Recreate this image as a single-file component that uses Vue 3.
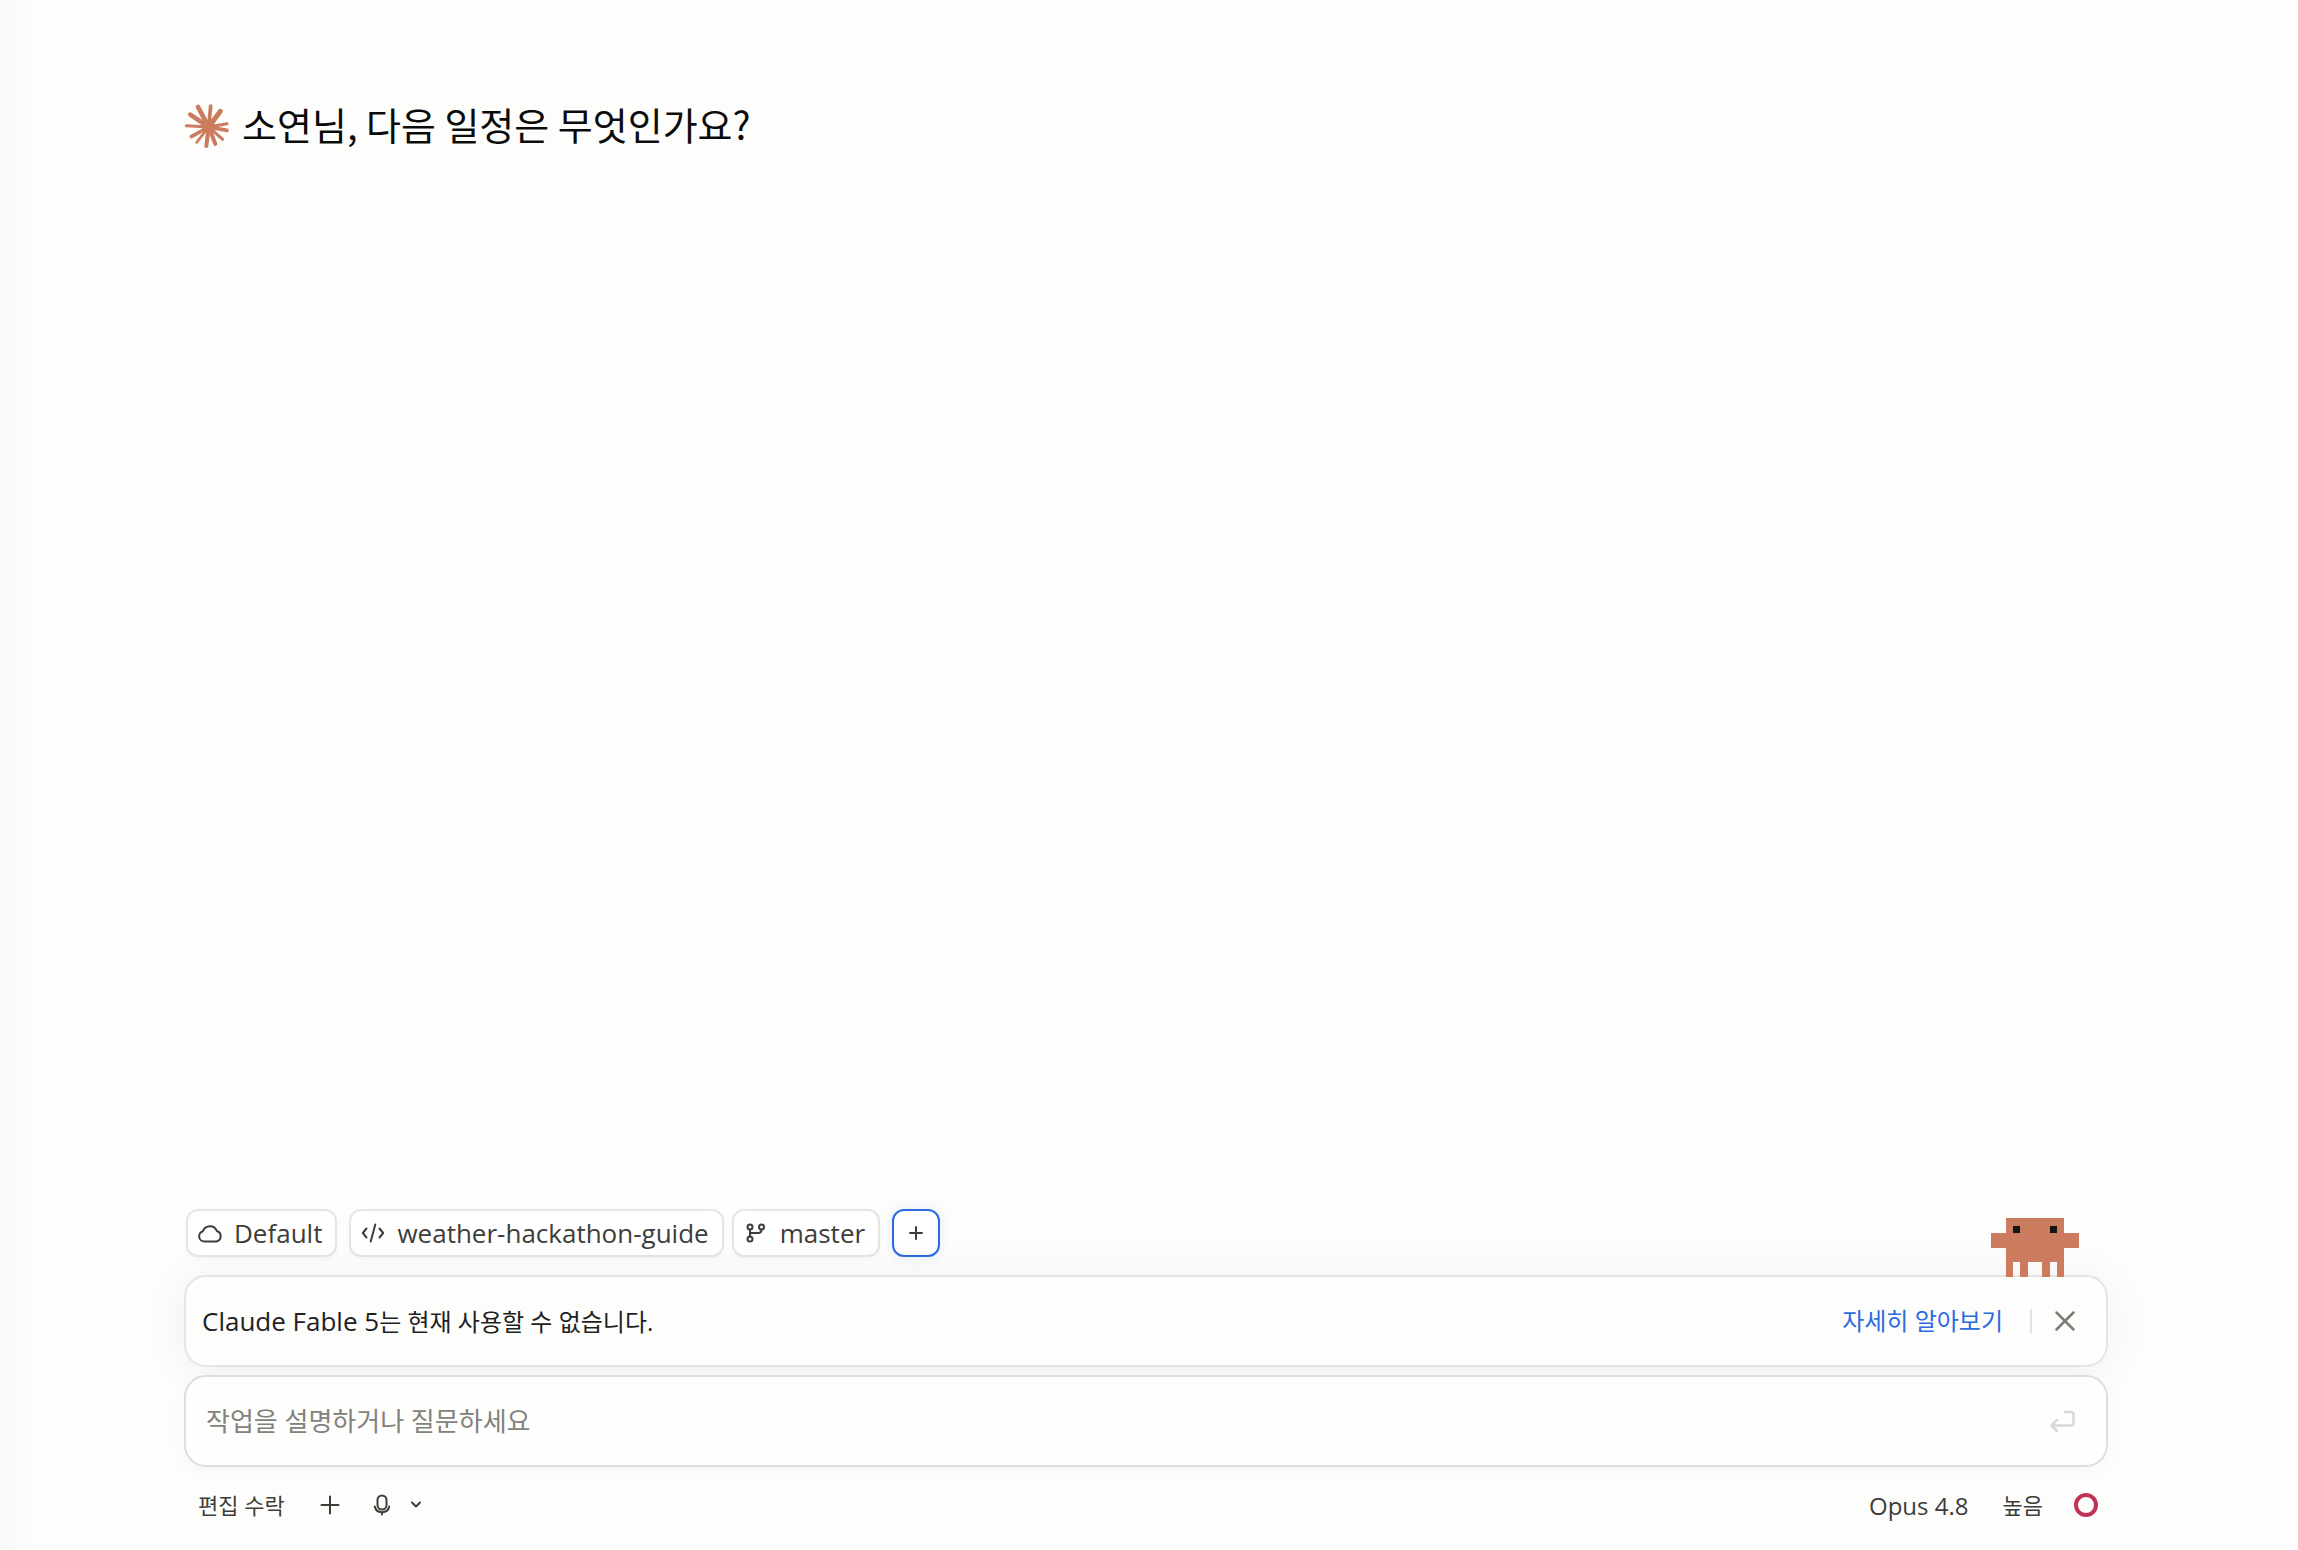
<script setup>
import { ref } from 'vue'

const prompt = ref('')
const showNotice = ref(true)

// ray tips of the logo, with their stroke widths
const rays = [
    { x: 57, y: 36, w: 14 },
    { x: 95, y: 33, w: 11 },
    { x: 124, y: 49, w: 15 },
    { x: 144, y: 86, w: 9 },
    { x: 144, y: 106, w: 11 },
    { x: 131, y: 133, w: 9 },
    { x: 109, y: 147, w: 12 },
    { x: 82, y: 153, w: 12 },
    { x: 53, y: 142, w: 8 },
    { x: 37, y: 125, w: 11 },
    { x: 22, y: 92, w: 9 },
    { x: 34, y: 59, w: 14 },
]
</script>

<template>
    <main class="page">
        <header class="greeting">
            <svg class="logo" viewBox="15 24 138 138" aria-hidden="true">
                <line v-for="(ray, i) in rays" :key="i" x1="89" y1="96" :x2="ray.x" :y2="ray.y" :stroke-width="ray.w" />
                <circle cx="89" cy="96" r="20" />
            </svg>
            <h1>소연님, 다음 일정은 무엇인가요?</h1>
        </header>

        <section class="composer">
            <div class="chips">
                <button class="chip" type="button">
                    <svg class="icon" viewBox="0 0 28 28">
                        <path d="M8.5 22.5a5.2 5.2 0 0 1-1.6-10.2A7.4 7.4 0 0 1 20.8 12a5.4 5.4 0 0 1-.6 10.5z" />
                    </svg>
                    Default
                </button>
                <div class="repo">
                    <button class="chip" type="button">
                        <svg class="icon" viewBox="0 0 28 28">
                            <path d="M7.5 9.5 3.8 14l3.7 4.5M20.5 9.5l3.7 4.5-3.7 4.5M16.3 5.5l-4.6 17" />
                        </svg>
                        weather-hackathon-guide
                    </button>
                    <button class="chip" type="button">
                        <svg class="icon" viewBox="0 0 28 28">
                            <circle cx="8" cy="8" r="2.5" />
                            <circle cx="19.5" cy="8" r="2.5" />
                            <circle cx="8" cy="20" r="2.5" />
                            <path d="M8 10.5v7M19.5 10.500c0 2.500-1 3.500-3.500 3.500H8" />
                        </svg>
                        master
                    </button>
                </div>
                <button class="chip chip-add" type="button" aria-label="추가">
                    <svg class="icon" viewBox="0 0 28 28">
                        <path d="M14 8v12M8 14h12" />
                    </svg>
                </button>
            </div>

            <div v-if="showNotice" class="card notice">
                <svg class="mascot" viewBox="0 0 12 8" shape-rendering="crispEdges" aria-hidden="true">
                    <path class="mascot-body" d="M2 0h8v2h2v2h-2v4H9V6H8v2H7V6H5v2H4V6H3v2H2V4H0V2h2z" />
                    <path class="mascot-eyes" d="M3 1h1v1H3zM8 1h1v1H8z" />
                </svg>
                <p>Claude Fable 5<span class="ko">는 현재 사용할 수 없습니다.</span></p>
                <a href="#">자세히 알아보기</a>
                <span class="divider"></span>
                <button class="icon-btn close" type="button" aria-label="닫기" @click="showNotice = false">
                    <svg class="icon" viewBox="0 0 28 28">
                        <path d="m5.5 5.5 17 17M22.500 5.500l-17 17" />
                    </svg>
                </button>
            </div>

            <form class="card prompt" @submit.prevent>
                <input v-model="prompt" type="text" placeholder="작업을 설명하거나 질문하세요" aria-label="작업을 설명하거나 질문하세요">
                <button class="icon-btn send" type="submit" aria-label="보내기">
                    <svg class="icon" viewBox="0 0 28 28">
                        <path d="M17 5h6a2.500 2.500 0 0 1 2.500 2.500v8.500a2.500 2.500 0 0 1-2.500 2.500H3.500M9 13l-5.500 5.500L9 24" />
                    </svg>
                </button>
            </form>

            <footer class="toolbar">
                <button class="tool ko-tool" type="button">편집 수락</button>
                <button class="icon-btn add" type="button" aria-label="파일 추가">
                    <svg class="icon" viewBox="0 0 28 28">
                        <path d="M14 5.500v17M5.500 14h17" />
                    </svg>
                </button>
                <button class="icon-btn mic" type="button" aria-label="음성 입력">
                    <svg class="icon" viewBox="0 0 28 28">
                        <rect x="9.500" y="4.500" width="9" height="14" rx="4.500" />
                        <path d="M6.800 15.500c.7 3.600 3.500 5.700 7.200 5.700s6.500-2.100 7.200-5.700M14 21.200v2.300" />
                    </svg>
                </button>
                <button class="icon-btn more" type="button" aria-label="마이크 설정">
                    <svg class="icon" viewBox="0 0 28 28">
                        <path d="m10 11.500 4 4 4-4" />
                    </svg>
                </button>
                <span class="spacer"></span>
                <button class="tool" type="button">Opus 4.8</button>
                <button class="tool ko-tool effort" type="button">높음</button>
                <button class="ring" type="button" aria-label="사용량"></button>
            </footer>
        </section>
    </main>
</template>

<style>
body {
    margin: 0;
    background: #fdfdfc;
}
</style>

<style scoped>
.page {
    display: flex;
    flex-direction: column;
    justify-content: space-between;
    box-sizing: border-box;
    min-height: 100vh;
    padding: 96px 190px 21px 184px;
    overflow: hidden;
    background: linear-gradient(90deg, #f9f9f8 0, #fdfdfc 36px);
    color: #3d3d3a;
    font-family: "Open Sans", "Noto Sans CJK KR", sans-serif;
}
button,
input {
    margin: 0;
    padding: 0;
    border: 0;
    background: none;
    color: inherit;
    font: inherit;
}
button {
    cursor: pointer;
}
.icon {
    display: block;
    flex: none;
    width: 28px;
    height: 28px;
    fill: none;
    stroke: currentColor;
    stroke-width: 2;
    stroke-linecap: round;
    stroke-linejoin: round;
}

.greeting {
    display: flex;
    align-items: center;
    gap: 12px;
    height: 60px;
}
.logo {
    width: 46px;
    height: 46px;
    fill: #cc7c5e;
    stroke: #cc7c5e;
    stroke-linecap: round;
}
.logo circle {
    stroke: none;
}
h1 {
    margin: 0;
    padding-bottom: 4px;
    color: #0b0b0b;
    font-family: "Noto Sans CJK KR", sans-serif;
    font-size: 38px;
    font-weight: 400;
    line-height: 56px;
}

.chips {
    display: flex;
    gap: 12px;
    margin: 0 2px 18px;
}
.repo {
    display: flex;
    gap: 8px;
}
.chip {
    display: flex;
    align-items: center;
    gap: 10px;
    box-sizing: border-box;
    height: 48px;
    padding: 0 13px 0 8px;
    border: 2px solid #e5e5e4;
    border-radius: 12px;
    background: #ffffff;
    box-shadow: 0 2px 4px rgba(0, 0, 0, 0.03);
    font-size: 26px;
    line-height: 44px;
    white-space: nowrap;
}
.chip-add {
    padding: 0 8px;
    border-color: #2c6bdf;
    box-shadow: 0 0 12px rgba(44, 107, 223, 0.12);
}

.card {
    position: relative;
    display: flex;
    align-items: center;
    box-sizing: border-box;
    height: 92px;
    border: 2px solid #dededd;
    border-radius: 22px;
    background: #fefefd;
    box-shadow: 0 4px 20px rgba(0, 0, 0, 0.03);
}
.notice {
    margin-bottom: 8px;
    padding: 0 27px 0 16px;
    border-color: #e4e4e3;
    background: #fdfdfc;
    box-shadow: 0 4px 48px rgba(0, 0, 0, 0.06);
}
.notice p {
    flex: 1;
    margin: 0;
    color: #1f1f1e;
    font-size: 26px;
}
.notice .ko,
.notice a {
    font-size: 24px;
}
.notice a {
    padding-bottom: 4px;
    color: #2c6bdf;
    text-decoration: none;
}
.mascot {
    position: absolute;
    right: 27px;
    bottom: 88px;
    width: 88px;
    height: 59px;
}
.mascot-body {
    fill: #cc7c5e;
}
.mascot-eyes {
    fill: #141413;
}
.divider {
    width: 2px;
    height: 24px;
    margin: 0 19px 0 27px;
    background: #e2e2e1;
}
.close {
    color: #7b7b77;
}
.close .icon,
.send .icon {
    stroke-width: 2.5;
}
.prompt {
    padding: 0 30px 0 20px;
}
.prompt input {
    flex: 1;
    min-width: 0;
    height: 60px;
    outline: 0;
    color: #1f1f1e;
    font-size: 26px;
}
.prompt input::placeholder {
    color: #82827d;
    opacity: 1;
}
.send {
    color: #d9d9d9;
}

.toolbar {
    display: flex;
    align-items: center;
    height: 48px;
    margin-top: 14px;
    padding: 0 10px 0 14px;
}
.tool {
    font-size: 24px;
}
.ko-tool {
    padding-bottom: 2px;
    font-size: 22px;
}
.add {
    margin-left: 31px;
}
.mic {
    margin-left: 24px;
}
.more {
    margin-left: 6px;
}
.spacer {
    flex: 1;
}
.effort {
    margin: 0 31px 0 34px;
}
.ring {
    box-sizing: border-box;
    width: 24px;
    height: 24px;
    border: 4px solid #c03357;
    border-radius: 50%;
}
</style>
